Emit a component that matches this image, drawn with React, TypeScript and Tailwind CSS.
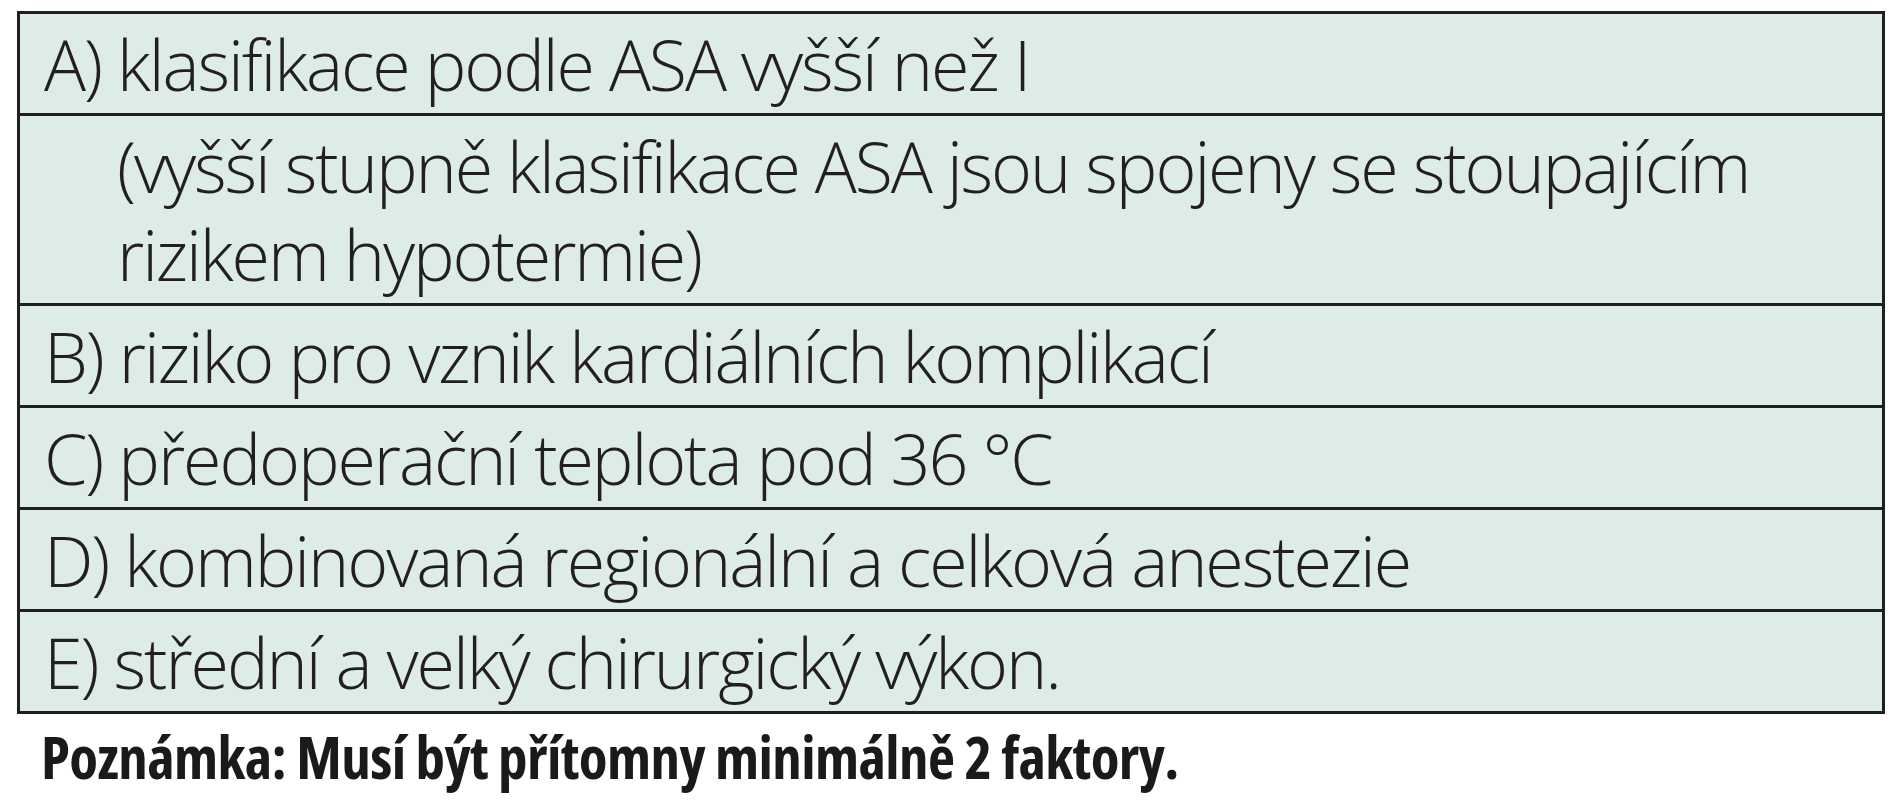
const rows: { text: React.ReactNode; indent?: boolean }[] = [
  { text: 'A) klasifikace podle ASA vyšší než I' },
  {
    text: (
      <>
        (vyšší stupně klasifikace ASA jsou spojeny se stoupajícím
        <br />
        rizikem hypotermie)
      </>
    ),
    indent: true,
  },
  { text: 'B) riziko pro vznik kardiálních komplikací' },
  { text: 'C) předoperační teplota pod 36 °C' },
  { text: 'D) kombinovaná regionální a celková anestezie' },
  { text: 'E) střední a velký chirurgický výkon.' },
];

export default function App() {
  return (
    <div className="min-h-screen w-full bg-white">
      <div className="ml-[17px] pt-[11px]">
        <div className="w-[1868px] border-[3px] border-[#1f1f1f] bg-[#deece7]">
          {rows.map((row, i) => (
            <div
              key={i}
              className={`pt-[6px] pb-[5px] font-['Open_Sans',sans-serif] text-[70px] leading-[88px] font-light tracking-[-0.03em] text-[#231f20] ${
                i > 0 ? 'border-t-[3px] border-[#1f1f1f]' : ''
              } ${row.indent ? 'pl-[97px]' : 'pl-[24px]'}`}
            >
              {row.text}
            </div>
          ))}
        </div>
        {/* Note under the table */}
        <p className="mt-[13px] pl-[24px] font-['Open_Sans',sans-serif] font-stretch-condensed text-[59px] leading-[58px] font-bold tracking-[-0.01em] text-[#1a1a1a]">
          Poznámka: Musí být přítomny minimálně 2 faktory.
        </p>
      </div>
    </div>
  );
}
